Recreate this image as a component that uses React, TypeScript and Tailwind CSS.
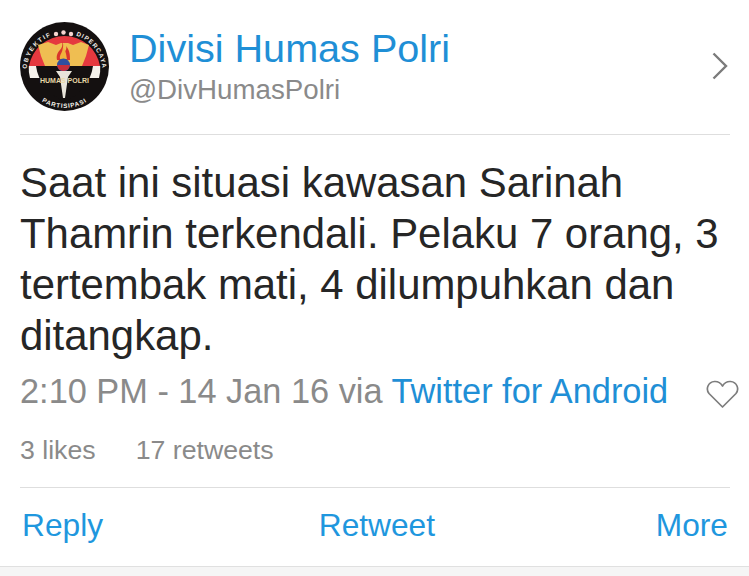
export default function App() {
  return (
    <div className="w-[749px] h-[576px] bg-white flex flex-col overflow-hidden font-['Liberation_Sans',Arial,sans-serif]">
      <div className="flex-1 pl-5 pr-[19px] flex flex-col">
        <div className="h-[135px] border-b border-[#dedede] flex items-start pt-[22px]">
          <svg className="w-[89px] h-[89px] shrink-0" viewBox="0 0 89 89">
            <defs>
              <path id="ringTop" d="M6.6 47 A38 38 0 0 1 82.4 47" />
              <path id="ringBottom" d="M6 60 A41.5 41.5 0 0 0 83 60" />
            </defs>
            <circle cx="44.5" cy="44.5" r="44.5" fill="#141010" />
            <path d="M9 44 A36 36 0 0 1 80 44 Z" fill="#e5393f" />
            <path d="M8.8 44 H80.2 A36 36 0 0 1 79 56 H10 A36 36 0 0 1 8.8 44 Z" fill="#f6f2ec" />
            <path d="M18 23 L28 20 L36 23 L41 21 L48 21 L53 23 L61 20 L69 23 L66 34 L62 44 H25 L21 34 Z" fill="#efbe52" />
            <path d="M16 44 H73 C71 60 60 72 44.5 80 C29 72 18 60 16 44 Z" fill="#141010" />
            <path d="M42 19 C45 24 41 27 44 31 C46 28 47 26 46 24 C50 29 50 33 50 38 L37 38 C36 33 38 30 40 28 C42 26 43 23 42 19 Z" fill="#d9352c" />
            <path d="M43 25 C46 29 46 32 47 37 H40 C39 33 43 30 43 25 Z" fill="#f2b13c" />
            <circle cx="43.5" cy="43" r="6.5" fill="#2f4f9f" />
            <path d="M37 43 H50 L49 46 A6.5 6.5 0 0 1 38 46 Z" fill="#c62f3b" />
            <path d="M36 49 H52 L48 55 L45 76 H43 L40 55 Z" fill="#e8e4da" />
            <circle cx="36" cy="12" r="2.2" fill="#f6d5d0" />
            <circle cx="43.5" cy="10.5" r="2.2" fill="#f6d5d0" />
            <circle cx="51" cy="12" r="2.2" fill="#f6d5d0" />
            <text x="44.5" y="61" textAnchor="middle" fontSize="7" fontWeight="700" fill="#e8d9a8" fontFamily="Liberation Sans">HUMAS POLRI</text>
            <text fontSize="6.2" fontWeight="700" fill="#f4f0ea" fontFamily="Liberation Sans" letterSpacing="1.6">
              <textPath href="#ringTop">OBYEKTIF</textPath>
            </text>
            <text fontSize="6.2" fontWeight="700" fill="#f4f0ea" fontFamily="Liberation Sans" letterSpacing="1.1" textAnchor="end">
              <textPath href="#ringTop" startOffset="100%">DIPERCAYA</textPath>
            </text>
            <text fontSize="6.2" fontWeight="700" fill="#f4f0ea" fontFamily="Liberation Sans" letterSpacing="0.9" textAnchor="middle">
              <textPath href="#ringBottom" startOffset="50%">PARTISIPASI</textPath>
            </text>
          </svg>
          <div className="ml-5 flex-1 min-w-0">
            <div className="text-[39.6px] leading-[46px] text-[#1f8fd6] mt-[3px] whitespace-nowrap">Divisi Humas Polri</div>
            <div className="text-[27.7px] leading-[32px] text-[#8a8a8a] mt-[3px] whitespace-nowrap">@DivHumasPolri</div>
          </div>
          <svg className="w-[18px] h-[30px] mt-[29px] mr-[1px] shrink-0" viewBox="0 0 18 30" fill="none" stroke="#7b7b7b" strokeWidth="2.4">
            <path d="M2.5 2.5 L15 15 L2.5 27.5" />
          </svg>
        </div>
        <div className="text-[41.9px] leading-[51px] text-[#262626] mt-[22px] whitespace-nowrap">
          <div>Saat ini situasi kawasan Sarinah</div>
          <div>Thamrin terkendali. Pelaku 7 orang, 3</div>
          <div>tertembak mati, 4 dilumpuhkan dan</div>
          <div>ditangkap.</div>
        </div>
        <div className="flex items-center justify-between mt-[9px] h-[44px]">
          <div className="text-[34.35px] text-[#8a8a8a] whitespace-nowrap">
            2:10 PM - 14 Jan 16 via <span className="text-[#1f8fd6]">Twitter for Android</span>
          </div>
          <svg className="w-[33px] h-[29px] mr-[-9px] mt-[4px] shrink-0" viewBox="0 0 33 29" fill="none" stroke="#7d7d7d" strokeWidth="1.7" strokeLinejoin="round">
            <path d="M16.5 27 L3 13.5 C-0.5 9 2 2 8.5 1.5 C12 1.3 15 3.5 16.5 6 C18 3.5 21 1.3 24.5 1.5 C31 2 33.5 9 30 13.5 Z" />
          </svg>
        </div>
        <div className="flex text-[26.7px] leading-[30px] text-[#8a8a8a] mt-[21px]">
          <span>3 likes</span>
          <span className="ml-[40px]">17 retweets</span>
        </div>
        <div className="border-t border-[#dedede] mt-[22px] flex justify-between text-[31.7px] leading-[36px] text-[#1f97de] pt-[19px] pl-[2px] pr-[2px]">
          <span>Reply</span>
          <span className="mr-[5px]">Retweet</span>
          <span>More</span>
        </div>
      </div>
      <div className="h-[10px] bg-[#f5f5f5] border-t border-[#e0e0e0]" />
    </div>
  );
}
